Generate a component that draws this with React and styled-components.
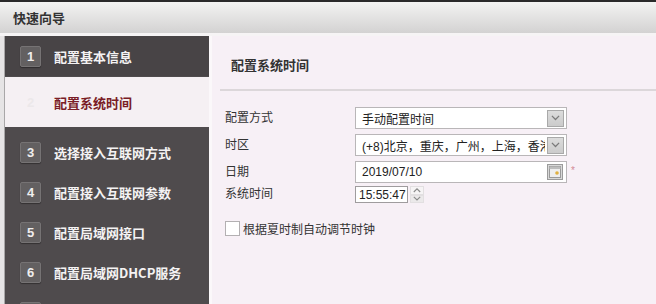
import React from "react";
import styled, { createGlobalStyle } from "styled-components";

const Global = createGlobalStyle`
  html, body { margin: 0; padding: 0; background: #f7f0f6; }
  body { font-family: "Liberation Sans", "Noto Sans CJK SC", sans-serif; }
  * { box-sizing: border-box; }
`;

const Page = styled.div`
  width: 656px;
  height: 304px;
  overflow: hidden;
  display: flex;
  flex-direction: column;
  background: #f7f0f6;
`;

const TopStrip = styled.div`
  height: 2px;
  background: #2a2a2a;
  flex: none;
`;

const Header = styled.div`
  height: 31px;
  flex: none;
  display: flex;
  align-items: center;
  padding-left: 13px;
  background: linear-gradient(#f3f3f2, #d3d2d2);
  color: #333;
  font: bold 13px "Noto Sans CJK SC", sans-serif;
`;

const Body = styled.div`
  flex: 1;
  display: flex;
  border-top: 3px solid #f6f4f5;
  min-height: 0;
`;

const SideWrap = styled.div`
  width: 212px;
  flex: none;
  display: flex;
  background: #e6e4e5;
  padding-left: 4px;
  border-right: 3px solid #fbf8fa;
`;

const Sidebar = styled.div`
  flex: 1;
  background: #4f4b4d;
  border-left: 1px solid #a9a7a8;
  display: flex;
  flex-direction: column;
`;

const Step = styled.div`
  flex: none;
  height: ${p => (p.$active ? 50 : 40)}px;
  margin: ${p => (p.$active ? "1px 0 5px" : "0")};
  display: flex;
  align-items: center;
  padding-left: 15px;
  background: ${p => (p.$active ? "#f5f0f3" : p.$first ? "#484446" : "transparent")};
`;

const NumBox = styled.div`
  width: 21px;
  height: 21px;
  display: flex;
  align-items: center;
  justify-content: center;
  border-radius: 2px;
  background: ${p => (p.$active ? "transparent" : "#636061")};
  border: 1px solid ${p => (p.$active ? "transparent" : "#767374")};
  box-shadow: ${p => (p.$active ? "none" : "0 1px 1px rgba(0,0,0,0.35)")};
  color: ${p => (p.$active ? "#ece8ea" : "#f0eeee")};
  font: bold 13px "Liberation Sans", sans-serif;
`;

const StepLabel = styled.span`
  margin-left: 13px;
  font: bold 13px "Noto Sans CJK SC", sans-serif;
  color: ${p => (p.$active ? "#7a1d26" : "#f4f2f3")};
  white-space: nowrap;
`;

const Content = styled.div`
  flex: 1;
  display: flex;
  flex-direction: column;
  background: #f7f0f6;
`;

const TitleBar = styled.div`
  height: 55px;
  margin-left: 8px;
  display: flex;
  align-items: center;
  padding-left: 11px;
  padding-top: 3px;
  border-bottom: 2px solid #dcd7da;
  color: #333;
  font: bold 13px "Noto Sans CJK SC", sans-serif;
`;

const Form = styled.div`
  padding: 16px 0 0 13px;
  display: flex;
  flex-direction: column;
`;

const Row = styled.div`
  display: flex;
  align-items: center;
  height: ${p => p.$h || 22}px;
  margin-bottom: ${p => p.$mb ?? 5}px;
`;

const Label = styled.div`
  width: 130px;
  flex: none;
  font: 12px "Noto Sans CJK SC", sans-serif;
  color: #333;
  margin-top: -4px;
`;

const Field = styled.div`
  position: relative;
  width: 212px;
  height: 100%;
  display: flex;
  align-items: center;
  background: #fff;
  border: 1px solid #b9b6b8;
  padding-left: 6px;
  font: 12px "Liberation Sans", "Noto Sans CJK SC", sans-serif;
  color: #222;
  white-space: nowrap;
  overflow: hidden;
`;

const FieldText = styled.span`
  flex: 1;
  overflow: hidden;
`;

const DropBtn = styled.div`
  flex: none;
  width: 17px;
  height: 17px;
  margin: 0 2px 0 2px;
  background: linear-gradient(#dcdcdc, #cbcbcb);
  border: 1px solid #a9a9a9;
  display: flex;
  align-items: center;
  justify-content: center;
`;

const CalBtn = styled.div`
  flex: none;
  width: 16px;
  height: 16px;
  margin-right: 3px;
  border: 1px solid #9b9b9b;
  background: #d8d8d8;
  display: flex;
  align-items: center;
  justify-content: center;
`;

const Asterisk = styled.span`
  margin-left: 4px;
  color: #d28a96;
  font: 10px "Liberation Sans", sans-serif;
  align-self: flex-start;
  margin-top: 4px;
`;

const TimeBox = styled.div`
  width: 53px;
  height: 100%;
  display: flex;
  align-items: center;
  background: #fff;
  border: 1px solid #9f9c9e;
  padding-left: 3px;
  font: 12px "Liberation Sans", sans-serif;
  color: #222;
  white-space: nowrap;
  overflow: hidden;
`;

const Spinner = styled.div`
  width: 14px;
  height: 100%;
  margin-left: 2px;
  display: flex;
  flex-direction: column;
`;

const SpinHalf = styled.div`
  flex: 1;
  display: flex;
  align-items: center;
  justify-content: center;
  border: 1px solid #e2dfe1;
  background: ${p => (p.$down ? "#ebe9ea" : "#f6f4f5")};
`;

const CheckRow = styled.label`
  display: flex;
  align-items: center;
  margin-top: 17px;
  font: 12px "Noto Sans CJK SC", sans-serif;
  color: #333;
`;

const CheckBox = styled.span`
  width: 15px;
  height: 15px;
  border: 1px solid #b3b0b2;
  background: #fff;
  margin-right: 3px;
`;

const Chevron = ({ up, size = 9, color = "#7a7a7a" }) => (
  <svg width={size} height={size * 0.6} viewBox="0 0 10 6">
    <path
      d={up ? "M1 5 L5 1 L9 5" : "M1 1 L5 5 L9 1"}
      fill="none"
      stroke={color}
      strokeWidth="1.4"
    />
  </svg>
);

const CalIcon = () => (
  <svg width="12" height="12" viewBox="0 0 12 12">
    <rect x="0.5" y="0.5" width="11" height="11" fill="#eeeeee" stroke="#9a9a9a" />
    <rect x="0.5" y="0.5" width="11" height="2.5" fill="#bdbdbd" />
    <circle cx="8" cy="7" r="1.8" fill="#e0b040" />
  </svg>
);

const steps = [
  "配置基本信息",
  "配置系统时间",
  "选择接入互联网方式",
  "配置接入互联网参数",
  "配置局域网接口",
  "配置局域网DHCP服务",
  "",
];

export default function App() {
  return (
    <Page>
      <Global />
      <TopStrip />
      <Header>快速向导</Header>
      <Body>
        <SideWrap>
          <Sidebar>
            {steps.map((s, i) => (
              <Step key={i} $active={i === 1} $first={i === 0}>
                <NumBox $active={i === 1}>{i + 1}</NumBox>
                {s && <StepLabel $active={i === 1}>{s}</StepLabel>}
              </Step>
            ))}
          </Sidebar>
        </SideWrap>
        <Content>
          <TitleBar>配置系统时间</TitleBar>
          <Form>
            <Row>
              <Label>配置方式</Label>
              <Field>
                <FieldText>手动配置时间</FieldText>
                <DropBtn><Chevron /></DropBtn>
              </Field>
            </Row>
            <Row>
              <Label>时区</Label>
              <Field>
                <FieldText>(+8)北京，重庆，广州，上海，香港</FieldText>
                <DropBtn><Chevron /></DropBtn>
              </Field>
            </Row>
            <Row $mb={3}>
              <Label>日期</Label>
              <Field>
                <FieldText>2019/07/10</FieldText>
                <CalBtn><CalIcon /></CalBtn>
              </Field>
              <Asterisk>*</Asterisk>
            </Row>
            <Row $h={17} $mb={0}>
              <Label>系统时间</Label>
              <TimeBox>15:55:47</TimeBox>
              <Spinner>
                <SpinHalf><Chevron up size={8} color="#8a8a8a" /></SpinHalf>
                <SpinHalf $down><Chevron size={8} color="#8a8a8a" /></SpinHalf>
              </Spinner>
            </Row>
            <CheckRow>
              <CheckBox />
              根据夏时制自动调节时钟
            </CheckRow>
          </Form>
        </Content>
      </Body>
    </Page>
  );
}
